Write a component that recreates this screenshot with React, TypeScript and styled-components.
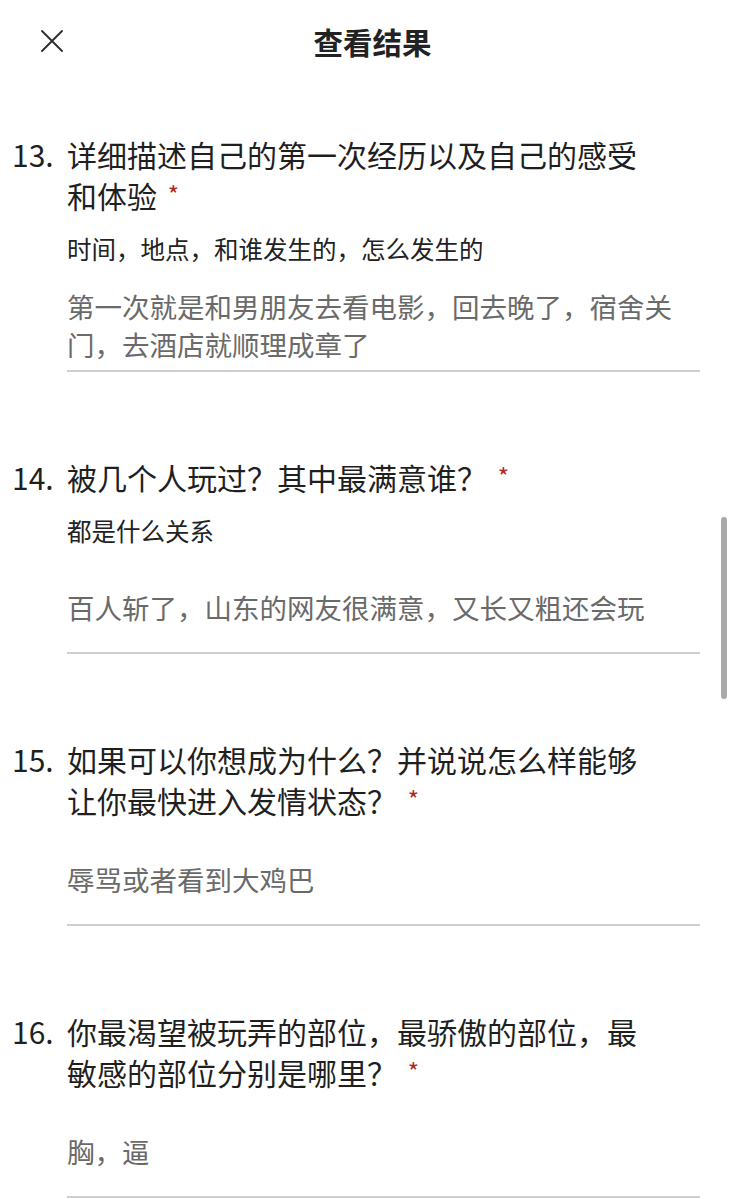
import styled, { createGlobalStyle } from 'styled-components';

const GlobalStyle = createGlobalStyle`
  html, body {
    margin: 0;
    padding: 0;
    background: #ffffff;
  }
  body {
    font-family: 'Noto Sans CJK SC', 'Noto Sans', sans-serif;
    color: #1f1f1f;
  }
`;

type Question = {
  no: number;
  title: string;
  hint?: string;
  answer: string;
};

const questions: Question[] = [
  {
    no: 13,
    title: '详细描述自己的第一次经历以及自己的感受和体验',
    hint: '时间，地点，和谁发生的，怎么发生的',
    answer: '第一次就是和男朋友去看电影，回去晚了，宿舍关门，去酒店就顺理成章了',
  },
  {
    no: 14,
    title: '被几个人玩过？其中最满意谁？',
    hint: '都是什么关系',
    answer: '百人斩了，山东的网友很满意，又长又粗还会玩',
  },
  {
    no: 15,
    title: '如果可以你想成为什么？并说说怎么样能够让你最快进入发情状态？',
    answer: '辱骂或者看到大鸡巴',
  },
  {
    no: 16,
    title: '你最渴望被玩弄的部位，最骄傲的部位，最敏感的部位分别是哪里？',
    answer: '胸，逼',
  },
];

export default function App() {
  return (
    <Page>
      <GlobalStyle />
      <Header>
        <CloseButton aria-label="关闭">
          <svg width="22" height="22" viewBox="0 0 22 22" fill="none">
            <path d="M1 1L21 21M21 1L1 21" stroke="#2b2b2b" strokeWidth="1.8" strokeLinecap="round" />
          </svg>
        </CloseButton>
        <HeaderTitle>查看结果</HeaderTitle>
        <span />
      </Header>

      <List>
        {questions.map((q) => (
          <Item key={q.no}>
            <Number>{q.no}.</Number>
            <Body>
              <Title>
                {q.title} <Required>*</Required>
              </Title>
              {q.hint && <Hint>{q.hint}</Hint>}
              <AnswerBox $hasHint={!!q.hint}>
                <Answer>{q.answer}</Answer>
              </AnswerBox>
            </Body>
          </Item>
        ))}
      </List>

      <ScrollThumb />
    </Page>
  );
}

const Page = styled.div`
  position: relative;
  width: 733px;
  min-height: 1199px;
  overflow: hidden;
`;

const Header = styled.header`
  display: grid;
  grid-template-columns: 1fr auto 1fr;
  align-items: center;
  height: 82px;
`;

const CloseButton = styled.button`
  justify-self: start;
  display: flex;
  align-items: center;
  justify-content: center;
  margin-left: 41px;
  padding: 0;
  border: none;
  background: transparent;
  cursor: pointer;
`;

const HeaderTitle = styled.h1`
  margin: 0 0 0 12px;
  font-size: 29.5px;
  font-weight: 700;
  color: #222;
`;

const List = styled.main`
  display: flex;
  flex-direction: column;
  gap: 85px;
  padding: 52px 33px 0 12px;
`;

const Item = styled.section`
  display: grid;
  grid-template-columns: 55px 1fr;
`;

const Number = styled.div`
  font-size: 30px;
  line-height: 40px;
  color: #1f1f1f;
`;

const Body = styled.div`
  display: flex;
  flex-direction: column;
`;

const Title = styled.h2`
  margin: 0;
  max-width: 590px;
  font-size: 30px;
  line-height: 41px;
  font-weight: 400;
  color: #1f1f1f;
`;

const Required = styled.span`
  margin-left: 4px;
  font-size: 24px;
  line-height: 1;
  vertical-align: 4px;
  color: #b3261e;
`;

const Hint = styled.p`
  margin: 18px 0 0;
  font-size: 24.5px;
  line-height: 30px;
  color: #222;
`;

const AnswerBox = styled.div<{ $hasHint: boolean }>`
  display: flex;
  flex-direction: column;
  justify-content: center;
  min-height: 76px;
  margin-top: ${({ $hasHint }) => ($hasHint ? '23px' : '20px')};
  padding: 0 16px 7px 0;
  border-bottom: 2px solid #cfcfcf;
`;

const Answer = styled.p`
  margin: 0;
  font-size: 27.5px;
  line-height: 38px;
  color: #6a6a6a;
`;

const ScrollThumb = styled.div`
  position: absolute;
  top: 517px;
  right: 6px;
  width: 6px;
  height: 182px;
  border-radius: 3px;
  background: #a9a9a9;
`;
